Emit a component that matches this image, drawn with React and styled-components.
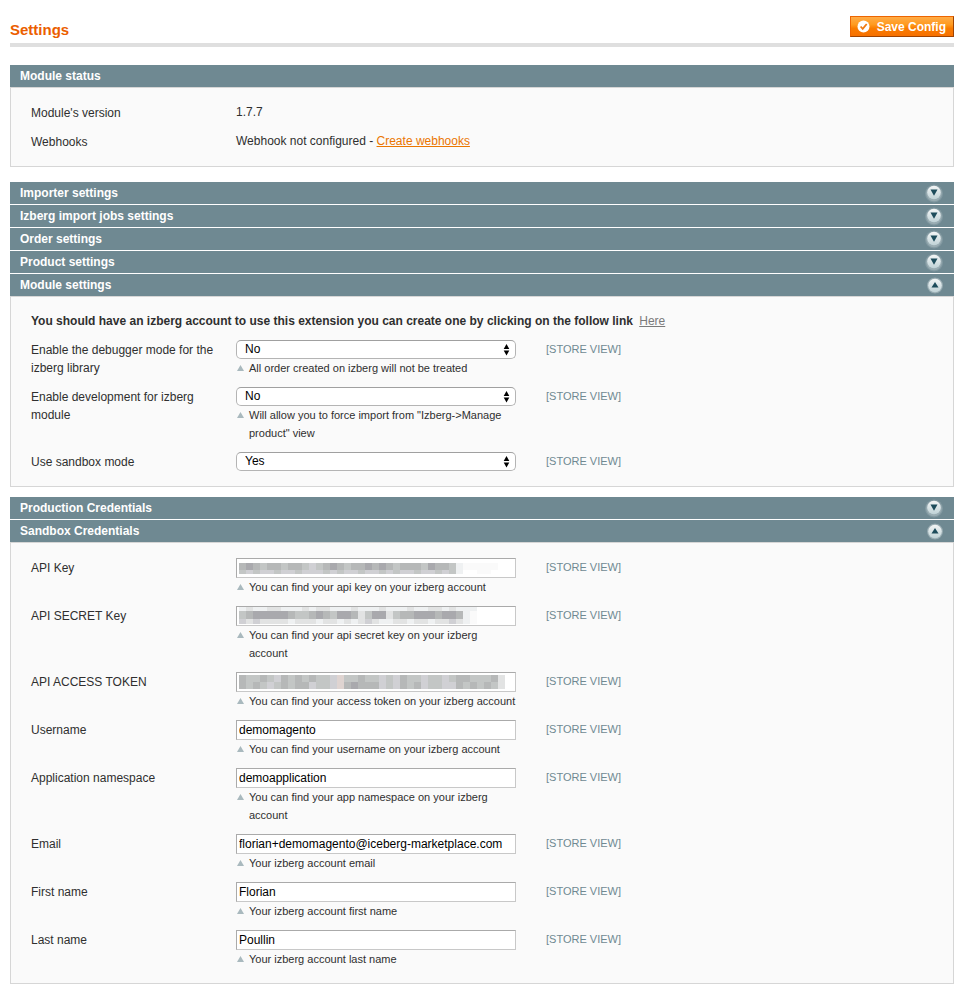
import React, { useState } from "react";
import styled, { createGlobalStyle } from "styled-components";

const GlobalStyle = createGlobalStyle`
  *, *::before, *::after { box-sizing: border-box; }
  body {
    margin: 0;
    background: #fff;
    color: #2f2f2f;
    font: 12px/18px "Liberation Sans", Arial, Helvetica, sans-serif;
  }
`;

const Page = styled.main`
  padding: 16px 18px 21px 10px;
`;

const PageHeader = styled.header`
  display: flex;
  align-items: flex-start;
  justify-content: space-between;
  height: 31px;
  margin-bottom: 18px;
  border-bottom: 4px solid #dfdfdf;
`;

const Title = styled.h1`
  margin: 5px 0 0;
  color: #eb5e00;
  font-size: 15px;
  line-height: 18px;
`;

const SaveButton = styled.button`
  display: flex;
  align-items: center;
  gap: 7px;
  height: 21px;
  padding: 0 7px 0 6px;
  border: 1px solid;
  border-color: #ed6502 #a04300 #a04300 #ed6502;
  background: linear-gradient(#ffac47 0, #ff9a1f 40%, #f97c00 60%, #f77000 100%);
  color: #fff;
  font: bold 12px/18px "Liberation Sans", Arial, sans-serif;
  cursor: pointer;
`;

const Stack = styled.div`
  display: flex;
  flex-direction: column;
  gap: 1px;
  margin-top: ${(p) => p.$space || 0}px;
`;

const Heading = styled.h2`
  margin: 0;
  font-size: 12px;
  line-height: 18px;
`;

const Bar = styled.span`
  display: flex;
  align-items: center;
  justify-content: space-between;
  width: 100%;
  height: 22px;
  padding: 0 10px;
  border: 0;
  background: #6f8992;
  color: #fff;
  font: bold 12px/18px "Liberation Sans", Arial, sans-serif;
  text-align: left;
`;

const Panel = styled.div`
  padding: 10px 15px;
  border: 1px solid #d6d6d6;
  background: #fafafa;
`;

const Row = styled.div`
  display: grid;
  grid-template-columns: 205px 310px 1fr;
  min-height: 29px;
  padding: 5px;
`;

const Label = styled.label`
  padding: 1px 10px 0 0;
`;

const Value = styled.div`
  width: 281px;
`;

const Scope = styled.span`
  color: #6f8992;
  font-size: 11px;
`;

const Notice = styled.p`
  margin: 0;
  padding: 5px;
  font-weight: bold;
`;

const Link = styled.a`
  margin-left: ${(p) => (p.$quiet ? 3 : 0)}px;
  color: ${(p) => (p.$quiet ? "#7a7a7a" : "#ea7601")};
  font-weight: normal;
  text-decoration: underline;
`;

const Control = styled.div`
  position: relative;
  width: 280px;
`;

const TextInput = styled.input`
  display: block;
  width: 100%;
  height: 20px;
  padding: 0 2px;
  border: 1px solid;
  border-color: #aaa #c8c8c8 #c8c8c8 #aaa;
  background: #fff;
  color: #000;
  font: 12px/18px "Liberation Sans", Arial, sans-serif;
`;

const Select = styled.select`
  display: block;
  width: 100%;
  height: 19px;
  padding: 0 20px 1px 8px;
  border: 1px solid #b4b4b4;
  border-top-color: #a0a0a0;
  border-radius: 5px;
  background: #fff;
  color: #000;
  font: 12px/16px "Liberation Sans", Arial, sans-serif;
  appearance: none;
`;

const SelectArrows = styled.svg`
  position: absolute;
  top: 4px;
  right: 6px;
  pointer-events: none;
`;

const Mosaic = styled.svg`
  position: absolute;
  top: 1px;
  left: 3px;
  pointer-events: none;
`;

const Hint = styled.p`
  display: flex;
  gap: 5px;
  margin: 0;
  padding-left: 1px;
  font-size: 11px;
  line-height: 18px;
`;

const HintMark = styled.svg`
  flex: none;
  margin-top: 6px;
`;

const Toggle = styled.svg`
  flex: none;
`;

const TONES = {
  a: "#a9a9ad", b: "#b6b8b8", c: "#c3c6c5", d: "#d0d0d4",
  e: "#e2e3e3", f: "#eff1f2", g: "#fafafa", p: "#dfd4d1", w: "#fff",
};

/* Each band: [top, height, one tone letter for each 7px cell]. */
const HIDDEN = {
  key: [
    [4, 7, "babcbbcbbcdcbabcbbababcbbbcabbcfggggg"],
    [11, 4, "cdcddcddcdddcdcddcddcdcddcddcdcfwwggw"],
  ],
  secret: [
    [0, 4, "feffeefffefeefffefffefffeffeefefffw"],
    [4, 8, "cbaaaaabccbabcaabecaaecbbaaabaabfg"],
    [12, 5, "dedeeeefeeefeefefedeffeefeefeedefg"],
  ],
  token: [
    [2, 7, "bccbcdbcbcbccdpccbccdcdbccdccdcbbcccbe"],
    [9, 7, "bcbcdcbcbbdccdpbabbbdcdbcbdccddbcbcbce"],
  ],
};

function HiddenValue({ bands }) {
  return (
    <Mosaic width="276" height="18" aria-hidden="true" shapeRendering="crispEdges">
      {bands.map(([top, height, cells]) =>
        [...cells].map((tone, i) => (
          <rect key={`${top}-${i}`} x={i * 7} y={top} width="7" height={height} fill={TONES[tone]} />
        ))
      )}
    </Mosaic>
  );
}

function ToggleIcon({ open }) {
  const cx = open ? 11 : 10;
  return (
    <Toggle width="20" height="20" viewBox="0 0 20 20" aria-hidden="true">
      <defs>
        <linearGradient id="disc" x1="0" y1="0" x2="0" y2="1">
          <stop offset="0" stopColor="#f4f6f6" />
          <stop offset="1" stopColor="#bfd2d6" />
        </linearGradient>
      </defs>
      <circle cx={cx} cy="10.5" r={open ? 8 : 9} fill="#8299a1" />
      <circle cx={cx} cy="10.5" r="7.8" fill="#9aadb3" />
      <circle cx={cx} cy={open ? 10.5 : 9.5} r="6.8" fill="url(#disc)" />
      <path d={open ? "M11 7 14.5 12.5H7.5Z" : "M6.5 6.5H13.5L10 12.8Z"} fill="#1d4c5b" />
    </Toggle>
  );
}

function Section({ title, initiallyOpen = false, children }) {
  const [open, setOpen] = useState(initiallyOpen);
  return (
    <section>
      <Heading>
        <Bar as="button" type="button" aria-expanded={open} onClick={() => setOpen(!open)}>
          {title}
          <ToggleIcon open={open} />
        </Bar>
      </Heading>
      {open && children && <Panel>{children}</Panel>}
    </section>
  );
}

function Field({ id, label, hint, options, value = "", hidden }) {
  return (
    <Row>
      <Label htmlFor={id}>{label}</Label>
      <Value>
        <Control>
          {options ? (
            <>
              <Select id={id} defaultValue={value}>
                {options.map((o) => <option key={o}>{o}</option>)}
              </Select>
              <SelectArrows width="7" height="12" viewBox="0 0 7 12" aria-hidden="true">
                <path d="M3.5 0 6.3 5H.7ZM3.5 11.5.7 6.5h5.6Z" fill="#000" />
              </SelectArrows>
            </>
          ) : (
            <TextInput id={id} type="text" defaultValue={value} />
          )}
          {hidden && <HiddenValue bands={hidden} />}
        </Control>
        {hint && (
          <Hint>
            <HintMark width="7" height="6" viewBox="0 0 7 6" aria-hidden="true">
              <path d="M3.5 0 7 6H0Z" fill="#a9b9be" />
            </HintMark>
            <span>{hint}</span>
          </Hint>
        )}
      </Value>
      <Scope>[STORE VIEW]</Scope>
    </Row>
  );
}

const YES_NO = ["Yes", "No"];

export default function App() {
  return (
    <Page>
      <GlobalStyle />
      <PageHeader>
        <Title>Settings</Title>
        <SaveButton type="button">
          <svg width="13" height="13" viewBox="0 0 13 13" aria-hidden="true">
            <circle cx="6.5" cy="6.5" r="6" fill="#fff" />
            <path d="M3.6 6.5 5.7 8.8 9.7 4" fill="none" stroke="#f07a13" strokeWidth="1.8" />
          </svg>
          Save Config
        </SaveButton>
      </PageHeader>

      <section>
        <Heading>
          <Bar>Module status</Bar>
        </Heading>
        <Panel>
          <Row>
            <Label as="span">Module's version</Label>
            <Value>1.7.7</Value>
          </Row>
          <Row>
            <Label as="span">Webhooks</Label>
            <Value>
              Webhook not configured - <Link href="#webhooks">Create webhooks</Link>
            </Value>
          </Row>
        </Panel>
      </section>

      <Stack $space={15}>
        <Section title="Importer settings" />
        <Section title="Izberg import jobs settings" />
        <Section title="Order settings" />
        <Section title="Product settings" />
        <Section title="Module settings" initiallyOpen>
          <Notice>
            You should have an izberg account to use this extension you can create one by clicking on the follow link{" "}
            <Link $quiet href="#account">Here</Link>
          </Notice>
          <Field id="debug" label="Enable the debugger mode for the izberg library" options={YES_NO} value="No" hint="All order created on izberg will not be treated" />
          <Field id="development" label="Enable development for izberg module" options={YES_NO} value="No" hint={'Will allow you to force import from "Izberg->Manage product" view'} />
          <Field id="sandbox" label="Use sandbox mode" options={YES_NO} value="Yes" />
        </Section>
      </Stack>

      <Stack $space={10}>
        <Section title="Production Credentials" />
        <Section title="Sandbox Credentials" initiallyOpen>
          <Field id="api-key" label="API Key" hidden={HIDDEN.key} hint="You can find your api key on your izberg account" />
          <Field id="api-secret" label="API SECRET Key" hidden={HIDDEN.secret} hint="You can find your api secret key on your izberg account" />
          <Field id="api-token" label="API ACCESS TOKEN" hidden={HIDDEN.token} hint="You can find your access token on your izberg account" />
          <Field id="username" label="Username" value="demomagento" hint="You can find your username on your izberg account" />
          <Field id="namespace" label="Application namespace" value="demoapplication" hint="You can find your app namespace on your izberg account" />
          <Field id="email" label="Email" value="florian+demomagento@iceberg-marketplace.com" hint="Your izberg account email" />
          <Field id="first-name" label="First name" value="Florian" hint="Your izberg account first name" />
          <Field id="last-name" label="Last name" value="Poullin" hint="Your izberg account last name" />
        </Section>
      </Stack>
    </Page>
  );
}
